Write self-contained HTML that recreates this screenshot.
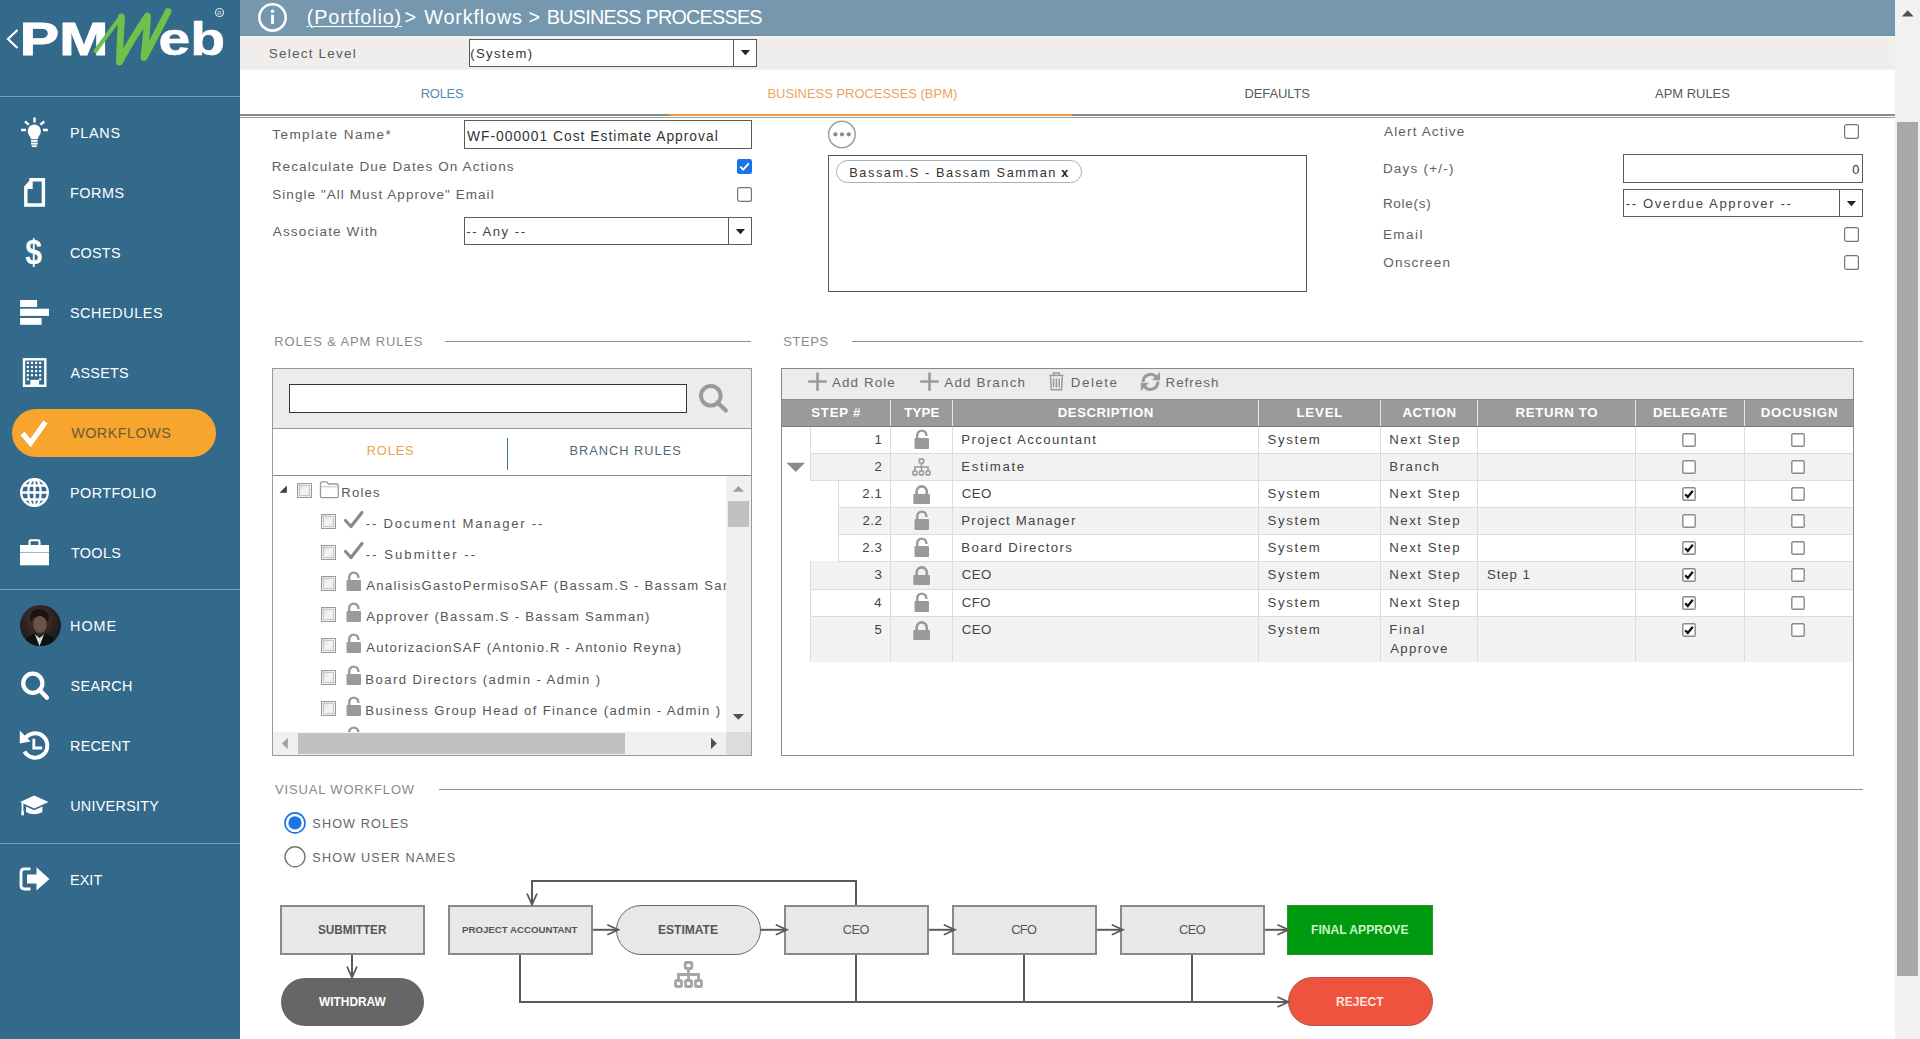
<!DOCTYPE html>
<html><head><meta charset="utf-8"><title>PMWeb - Business Processes</title>
<style>
html,body{margin:0;padding:0;width:1920px;height:1039px;overflow:hidden;background:#fff;font-family:"Liberation Sans",sans-serif}
.t{position:absolute;white-space:nowrap;line-height:normal;font-family:"Liberation Sans",sans-serif}
.r{position:absolute;box-sizing:border-box}
svg{position:absolute;overflow:visible}
svg text{font-family:"Liberation Sans",sans-serif}
</style></head><body>
<div class="r" style="left:0px;top:0px;width:240px;height:1039px;background:#336a8c"></div>
<div class="r" style="left:0px;top:96px;width:240px;height:1px;background:#6ea2c6"></div>
<div class="r" style="left:0px;top:589px;width:240px;height:1px;background:#6ea2c6"></div>
<div class="r" style="left:0px;top:843px;width:240px;height:1px;background:#6ea2c6"></div>
<svg class="r" style="left:0;top:0" width="240" height="96" viewBox="0 0 240 96">
<path d="M17.5 30 L8 39 L17.5 48" fill="none" stroke="#fff" stroke-width="2.2"/>
<text x="19.8" y="55" font-family="Liberation Sans" font-weight="bold" font-size="47" fill="#fff" stroke="#fff" stroke-width="1" textLength="88.5" lengthAdjust="spacingAndGlyphs">PM</text>
<text x="158.5" y="55" font-family="Liberation Sans" font-weight="bold" font-size="46.5" fill="#fff" stroke="#fff" stroke-width="0.6" textLength="66.5" lengthAdjust="spacingAndGlyphs">eb</text>
<path d="M95.5 51 L121 16.5" fill="none" stroke="#6cc24a" stroke-width="4" stroke-linecap="round"/>
<path d="M121.5 17 C121 32 119.5 46 119.5 62.2 C128 46 138 30 147.5 16 C147 30 145.5 44 144 57.5 C152 43 160 27 168 11.5" fill="none" stroke="#6cc24a" stroke-width="6.8" stroke-linecap="round" stroke-linejoin="round"/>
<circle cx="219.5" cy="12.5" r="4" fill="none" stroke="#cfe0ec" stroke-width="1.2"/>
<text x="219.5" y="15" font-family="Liberation Sans" font-size="6" fill="#cfe0ec" text-anchor="middle">R</text>
</svg>
<div class="r" style="left:12px;top:409px;width:204px;height:48px;background:#f7a52c;border-radius:24px"></div>
<div class="t" style="left:69.91px;top:125px;font-size:14.39px;color:#ffffff;letter-spacing:0.759px;">PLANS</div>
<div class="t" style="left:69.91px;top:185px;font-size:14.39px;color:#ffffff;letter-spacing:0.588px;">FORMS</div>
<div class="t" style="left:69.88px;top:245px;font-size:14.39px;color:#ffffff;letter-spacing:0.274px;">COSTS</div>
<div class="t" style="left:69.95px;top:305px;font-size:14.39px;color:#ffffff;letter-spacing:0.592px;">SCHEDULES</div>
<div class="t" style="left:70.56px;top:365px;font-size:14.39px;color:#ffffff;letter-spacing:0.276px;">ASSETS</div>
<div class="t" style="left:71.18px;top:425px;font-size:14.39px;color:#6d5a3c;letter-spacing:0.472px;">WORKFLOWS</div>
<div class="t" style="left:70.06px;top:485px;font-size:14.39px;color:#ffffff;letter-spacing:0.417px;">PORTFOLIO</div>
<div class="t" style="left:70.93px;top:545px;font-size:14.39px;color:#ffffff;letter-spacing:0.361px;">TOOLS</div>
<div class="t" style="left:70.06px;top:618px;font-size:14.39px;color:#ffffff;letter-spacing:0.993px;">HOME</div>
<div class="t" style="left:70.60px;top:678px;font-size:14.39px;color:#ffffff;letter-spacing:0.373px;">SEARCH</div>
<div class="t" style="left:70.06px;top:738px;font-size:14.39px;color:#ffffff;letter-spacing:0.224px;">RECENT</div>
<div class="t" style="left:70.13px;top:798px;font-size:14.39px;color:#ffffff;letter-spacing:0.285px;">UNIVERSITY</div>
<div class="t" style="left:70.06px;top:872px;font-size:14.39px;color:#ffffff;letter-spacing:0.060px;">EXIT</div>
<svg class="r" style="left:0;top:96" width="240" height="943" viewBox="0 96 240 943">
<g fill="none" stroke="#ffffff" stroke-width="2.4" stroke-linecap="butt">
<path d="M34.5 117.5 V122.5 M25 121.5 L28.8 124.6 M44.2 121.5 L40.4 124.6 M21 130 H26 M43 130 H47.8"/>
</g>
<circle cx="34.3" cy="131" r="6.6" fill="#ffffff"/>
<path d="M28.2 132.5 L31 139 H37.6 L40.4 132.5 Z" fill="#ffffff"/>
<rect x="31" y="139.8" width="6.6" height="2" fill="#ffffff"/><rect x="31" y="142.6" width="6.6" height="2" fill="#ffffff"/><rect x="31.8" y="145.3" width="5" height="1.8" fill="#ffffff"/>
<path d="M31 179.8 H43.4 V205 H25.8 V187.2 L31 181.5 Z M31 180 V187.2 H25.8" fill="none" stroke="#ffffff" stroke-width="3.4" stroke-linejoin="miter"/>
<text x="0" y="0" font-family="Liberation Sans" font-weight="bold" font-size="35" fill="#ffffff" transform="translate(25.3,264.4) scale(0.86,1)">$</text>
<rect x="20.1" y="300" width="17" height="7" fill="#ffffff"/>
<rect x="20.1" y="308.7" width="28.9" height="7.2" fill="#ffffff"/>
<rect x="20.1" y="318" width="21.5" height="6.8" fill="#ffffff"/>
<rect x="24" y="359.3" width="21.3" height="26.5" fill="none" stroke="#ffffff" stroke-width="2.4"/>
<g fill="#ffffff">
<rect x="26.8" y="361.8" width="2.2" height="2.2"/><rect x="30.9" y="361.8" width="2.2" height="2.2"/><rect x="35.0" y="361.8" width="2.2" height="2.2"/><rect x="39.1" y="361.8" width="2.2" height="2.2"/><rect x="26.8" y="365.9" width="2.2" height="2.2"/><rect x="30.9" y="365.9" width="2.2" height="2.2"/><rect x="35.0" y="365.9" width="2.2" height="2.2"/><rect x="39.1" y="365.9" width="2.2" height="2.2"/><rect x="26.8" y="370.0" width="2.2" height="2.2"/><rect x="30.9" y="370.0" width="2.2" height="2.2"/><rect x="35.0" y="370.0" width="2.2" height="2.2"/><rect x="39.1" y="370.0" width="2.2" height="2.2"/><rect x="26.8" y="374.1" width="2.2" height="2.2"/><rect x="30.9" y="374.1" width="2.2" height="2.2"/><rect x="35.0" y="374.1" width="2.2" height="2.2"/><rect x="39.1" y="374.1" width="2.2" height="2.2"/><rect x="26.8" y="378.2" width="2.2" height="2.2"/><rect x="39.1" y="378.2" width="2.2" height="2.2"/>
<rect x="30.3" y="379.8" width="8.8" height="6" />
</g>
<path d="M22.5 433.5 L30.5 443 L45.5 422" fill="none" stroke="#ffffff" stroke-width="5.2" stroke-linecap="butt" stroke-linejoin="miter"/>
<g fill="none" stroke="#ffffff" stroke-width="2.3">
<circle cx="34.5" cy="492.5" r="13.3"/>
<ellipse cx="34.5" cy="492.5" rx="6.2" ry="13.3"/>
<path d="M34.5 479.2 V505.8 M21.2 492.5 H47.8 M23.5 485.5 H45.5 M23.5 499.5 H45.5"/>
</g>
<path d="M29.5 545.5 V541.5 Q29.5 540.3 30.8 540.3 H38.2 Q39.5 540.3 39.5 541.5 V545.5" fill="none" stroke="#ffffff" stroke-width="2"/>
<rect x="20" y="545" width="29" height="20.3" fill="#ffffff"/>
<rect x="20" y="552" width="29" height="1" fill="#9fb8c8"/>
<defs><clipPath id="avc"><circle cx="40.5" cy="625.5" r="20.5"/></clipPath><radialGradient id="av" cx="0.45" cy="0.35" r="0.7"><stop offset="0" stop-color="#4a3a32"/><stop offset="0.6" stop-color="#2a211d"/><stop offset="1" stop-color="#14161a"/></radialGradient></defs>
<g clip-path="url(#avc)">
<rect x="20" y="605" width="41" height="41" fill="url(#av)"/>
<path d="M30 618 Q31 609 39 609 Q48 609 49 617 L48 622 Q44 616 39 616 Q33 617 31 622Z" fill="#1a1410"/>
<ellipse cx="40" cy="624.5" rx="6.8" ry="8.6" fill="#6a5448"/>
<path d="M22 646 Q26 636 34 634 L39.5 640 L46 634 Q55 636 59 646Z" fill="#0e1014"/>
<path d="M35 634.5 L39.5 646 L44 634.5 L39.5 638Z" fill="#d8d8d8"/>
</g>
<circle cx="32.8" cy="683.3" r="9.6" fill="none" stroke="#ffffff" stroke-width="4.2"/>
<path d="M39.5 690 L46.8 697.5" stroke="#ffffff" stroke-width="4.6" stroke-linecap="round"/>
<path d="M24.5 739.5 A12.2 12.2 0 1 1 24.5 751.5" fill="none" stroke="#ffffff" stroke-width="4"/>
<path d="M19.8 730.6 L30.6 741.6 L19.8 743.5 Z" fill="#ffffff"/>
<path d="M33.8 738.8 V748 H42.2" fill="none" stroke="#ffffff" stroke-width="2.8"/>
<path d="M20 802 L34.2 795.6 L48.5 802 L34.2 808.4 Z" fill="#ffffff"/>
<path d="M26 806.5 V812 Q34.2 816.5 42.4 812 V806.5 L34.2 810.2 Z" fill="#ffffff"/>
<path d="M22.5 803 V813" stroke="#ffffff" stroke-width="1.8"/>
<rect x="21.3" y="811.5" width="2.6" height="3.8" fill="#ffffff"/>
<path d="M30.5 868.8 H24.5 Q21 868.8 21 872.3 V885.5 Q21 889 24.5 889 H30.5" fill="none" stroke="#ffffff" stroke-width="2.8"/>
<path d="M27 874.5 H36.5 V867.3 L49.4 879 L36.5 890.6 V883.5 H27 Z" fill="#ffffff"/>
</svg>
<div class="r" style="left:240px;top:0px;width:1655px;height:36px;background:#7598ae"></div>
<svg class="r" style="left:255;top:0" width="36" height="36" viewBox="255 0 36 36">
<circle cx="272.5" cy="17.4" r="13.2" fill="none" stroke="#fff" stroke-width="2.6"/>
<circle cx="272.5" cy="11.3" r="1.8" fill="#fff"/>
<rect x="271.1" y="14.6" width="2.8" height="9.4" fill="#fff"/>
</svg>
<div class="t" style="left:306.76px;top:6px;font-size:19.77px;color:#fff;letter-spacing:0.873px;"><span style="text-decoration:underline;text-underline-offset:2px;text-decoration-thickness:1px">(Portfolio)</span></div>
<div class="t" style="left:404.61px;top:6px;font-size:19.77px;color:#fff;">&gt;</div>
<div class="t" style="left:424.30px;top:6px;font-size:19.77px;color:#fff;letter-spacing:0.857px;">Workflows</div>
<div class="t" style="left:528.41px;top:6px;font-size:19.77px;color:#fff;">&gt;</div>
<div class="t" style="left:546.77px;top:6px;font-size:19.77px;color:#fff;letter-spacing:-0.747px;">BUSINESS PROCESSES</div>
<div class="r" style="left:240px;top:36px;width:1655px;height:34px;background:linear-gradient(to bottom,#f4f6f6 0px,#f0eeec 3px,#f4ede6 6px,#f1ede9 9px,#f0eeec 14px,#f0eeec 26px,#ececec 32px,#f4f4f4 34px)"></div>
<div class="r" style="left:240px;top:35px;width:1655px;height:1px;background:#6e8c9f"></div>
<div class="t" style="left:268.69px;top:46px;font-size:13.52px;color:#5a5a5a;letter-spacing:1.226px;">Select Level</div>
<div class="r" style="left:469px;top:39px;width:288px;height:28px;background:#fff;border:1px solid #5a5a5a"></div>
<div class="r" style="left:733px;top:40px;width:1px;height:26px;background:#5a5a5a"></div>
<svg class="r" style="left:740;top:49" width="12" height="8"><path d="M0.8 1 H10 L5.4 6.2Z" fill="#222"/></svg>
<div class="t" style="left:470.18px;top:46px;font-size:13.08px;color:#333;letter-spacing:1.382px;">(System)</div>
<div class="r" style="left:240px;top:70px;width:1655px;height:44px;background:#fff"></div>
<div class="r" style="left:240px;top:114px;width:1655px;height:2px;background:#8a8a8a"></div>
<div class="r" style="left:240px;top:117px;width:1655px;height:1px;background:#a0a0a0"></div>
<div class="r" style="left:669px;top:114px;width:403px;height:2px;background:#eb9a43"></div>
<div class="t" style="left:420.63px;top:86px;font-size:12.94px;color:#5a89ac;letter-spacing:-0.201px;">ROLES</div>
<div class="t" style="left:767.43px;top:86px;font-size:12.94px;color:#eaa45a;">BUSINESS PROCESSES (BPM)</div>
<div class="t" style="left:1244.53px;top:86px;font-size:12.94px;color:#505a64;letter-spacing:-0.066px;">DEFAULTS</div>
<div class="t" style="left:1655.07px;top:86px;font-size:12.94px;color:#505a64;letter-spacing:0.006px;">APM RULES</div>
<div class="r" style="left:1895px;top:0px;width:25px;height:1039px;background:#f1f1f1"></div>
<svg class="r" style="left:1900;top:9" width="16" height="9"><path d="M1.8 7.5 H13.6 L7.7 1.3Z" fill="#505050"/></svg>
<div class="r" style="left:1897px;top:122px;width:21px;height:854px;background:#a8a8a8"></div>
<div class="t" style="left:272.30px;top:127px;font-size:13.52px;color:#606060;letter-spacing:1.424px;">Template Name*</div>
<div class="r" style="left:464px;top:120px;width:288px;height:29px;background:#fff;border:1px solid #5a5a5a"></div>
<div class="t" style="left:466.93px;top:128px;font-size:13.81px;color:#333;letter-spacing:1.016px;">WF-000001 Cost Estimate Approval</div>
<div class="t" style="left:271.68px;top:159px;font-size:13.52px;color:#606060;letter-spacing:1.113px;">Recalculate Due Dates On Actions</div>
<svg class="r" style="left:737px;top:159px" width="15" height="15" viewBox="0 0 15 15"><rect x="0" y="0" width="15" height="15" rx="2.2" fill="#1a73e8"/><path d="M3.2 7.6 L6.2 10.6 L11.8 4.4" fill="none" stroke="#fff" stroke-width="2"/></svg>
<div class="t" style="left:272.19px;top:187px;font-size:13.52px;color:#606060;letter-spacing:1.053px;">Single "All Must Approve" Email</div>
<svg class="r" style="left:737px;top:187px" width="15" height="15" viewBox="0 0 15 15"><rect x="0.6" y="0.6" width="13.8" height="13.8" rx="2" fill="#fff" stroke="#767676" stroke-width="1.2"/></svg>
<div class="t" style="left:272.77px;top:224px;font-size:13.52px;color:#606060;letter-spacing:1.150px;">Associate With</div>
<div class="r" style="left:464px;top:217px;width:288px;height:28px;background:#fff;border:1px solid #5a5a5a"></div>
<div class="r" style="left:728px;top:218px;width:1px;height:26px;background:#5a5a5a"></div>
<svg class="r" style="left:734.5px;top:227.5px" width="12" height="8"><path d="M0.8 1 H10 L5.4 6.2Z" fill="#222"/></svg>
<div class="t" style="left:466.31px;top:224px;font-size:13.08px;color:#444;letter-spacing:1.530px;">-- Any --</div>
<svg class="r" style="left:826px;top:118px" width="32" height="32" viewBox="826 118 32 32">
<circle cx="841.9" cy="134.5" r="13.3" fill="#fff" stroke="#a0a0a0" stroke-width="1.5"/>
<circle cx="835.4" cy="134.3" r="2.1" fill="#8a8a8a"/><circle cx="842" cy="134.3" r="2.1" fill="#8a8a8a"/><circle cx="848.8" cy="134.3" r="2.1" fill="#8a8a8a"/>
</svg>
<div class="r" style="left:828px;top:155px;width:479px;height:137px;background:#fff;border:1.4px solid #555"></div>
<div class="r" style="left:836px;top:160px;width:246px;height:23px;background:#fff;border:1px solid #9fb3c3;border-radius:12px"></div>
<div class="t" style="left:849.24px;top:165px;font-size:12.79px;color:#333;letter-spacing:1.555px;">Bassam.S - Bassam Samman</div>
<div class="t" style="left:1061.31px;top:166px;font-size:12.50px;color:#222;font-weight:bold;">x</div>
<div class="t" style="left:1383.97px;top:124px;font-size:13.52px;color:#606060;letter-spacing:1.156px;">Alert Active</div>
<svg class="r" style="left:1844px;top:124px" width="15" height="15" viewBox="0 0 15 15"><rect x="0.6" y="0.6" width="13.8" height="13.8" rx="2" fill="#fff" stroke="#767676" stroke-width="1.2"/></svg>
<div class="t" style="left:1382.88px;top:161px;font-size:13.52px;color:#606060;letter-spacing:1.201px;">Days (+/-)</div>
<div class="r" style="left:1623px;top:154px;width:240px;height:29px;background:#fff;border:1px solid #5a5a5a"></div>
<div class="t" style="left:1852.19px;top:162px;font-size:12.79px;color:#333;">0</div>
<div class="t" style="left:1382.88px;top:196px;font-size:13.52px;color:#606060;letter-spacing:0.728px;">Role(s)</div>
<div class="r" style="left:1623px;top:189px;width:240px;height:28px;background:#fff;border:1px solid #5a5a5a"></div>
<div class="r" style="left:1839px;top:190px;width:1px;height:26px;background:#5a5a5a"></div>
<svg class="r" style="left:1845.5px;top:199.5px" width="12" height="8"><path d="M0.8 1 H10 L5.4 6.2Z" fill="#222"/></svg>
<div class="t" style="left:1625.81px;top:196px;font-size:13.08px;color:#444;letter-spacing:1.628px;">-- Overdue Approver --</div>
<div class="t" style="left:1382.88px;top:227px;font-size:13.52px;color:#606060;letter-spacing:1.459px;">Email</div>
<svg class="r" style="left:1844px;top:227px" width="15" height="15" viewBox="0 0 15 15"><rect x="0.6" y="0.6" width="13.8" height="13.8" rx="2" fill="#fff" stroke="#767676" stroke-width="1.2"/></svg>
<div class="t" style="left:1383.36px;top:255px;font-size:13.52px;color:#606060;letter-spacing:1.141px;">Onscreen</div>
<svg class="r" style="left:1844px;top:255px" width="15" height="15" viewBox="0 0 15 15"><rect x="0.6" y="0.6" width="13.8" height="13.8" rx="2" fill="#fff" stroke="#767676" stroke-width="1.2"/></svg>
<div class="t" style="left:274.33px;top:334px;font-size:12.94px;color:#8a8a8a;letter-spacing:0.895px;">ROLES &amp; APM RULES</div>
<div class="r" style="left:445px;top:341px;width:306px;height:1px;background:#8f8f8f"></div>
<div class="t" style="left:783.22px;top:334px;font-size:12.94px;color:#8a8a8a;letter-spacing:0.609px;">STEPS</div>
<div class="r" style="left:852px;top:341px;width:1011px;height:1px;background:#8f8f8f"></div>
<div class="t" style="left:275.04px;top:782px;font-size:12.94px;color:#8a8a8a;letter-spacing:0.878px;">VISUAL WORKFLOW</div>
<div class="r" style="left:439px;top:789px;width:1424px;height:1px;background:#8f8f8f"></div>
<div class="r" style="left:272px;top:368px;width:480px;height:388px;background:#fff;border:1px solid #9a9a9a"></div>
<div class="r" style="left:273px;top:369px;width:478px;height:60px;background:#ececec"></div>
<div class="r" style="left:273px;top:428px;width:478px;height:1px;background:#9a9a9a"></div>
<div class="r" style="left:289px;top:384px;width:398px;height:29px;background:#fff;border:1px solid #333"></div>
<svg class="r" style="left:696px;top:382px" width="34" height="34" viewBox="696 382 34 34"><circle cx="710.8" cy="395.8" r="9.8" fill="none" stroke="#9a9a9a" stroke-width="4"/><path d="M717.5 402.5 L725.8 410.5" stroke="#9a9a9a" stroke-width="4.2" stroke-linecap="round"/></svg>
<div class="t" style="left:366.64px;top:443px;font-size:12.79px;color:#eaa44c;letter-spacing:0.918px;">ROLES</div>
<div class="r" style="left:507px;top:438px;width:1px;height:32px;background:#3d7f96"></div>
<div class="t" style="left:569.44px;top:443px;font-size:12.79px;color:#4f6a7a;letter-spacing:1.011px;">BRANCH RULES</div>
<div class="r" style="left:273px;top:475px;width:478px;height:1px;background:#8a8a8a"></div>
<svg class="r" style="left:279px;top:485px" width="9" height="9"><path d="M7.8 0.6 V7.8 H0.6Z" fill="#3c3c50"/></svg>
<svg class="r" style="left:296.5px;top:483px" width="15" height="15" viewBox="0 0 15 15"><defs><linearGradient id="tg296.5483" x1="0" y1="0" x2="1" y2="1"><stop offset="0" stop-color="#d8d8d8"/><stop offset="0.5" stop-color="#f4f4f4"/><stop offset="1" stop-color="#e6e6e6"/></linearGradient></defs><rect x="0.5" y="0.5" width="14" height="14" fill="url(#tg296.5483)" stroke="#9a9a9a" stroke-width="1"/><rect x="2.5" y="2.5" width="10" height="10" fill="none" stroke="#c8c8c8" stroke-width="1"/></svg>
<svg class="r" style="left:319px;top:480px" width="22" height="19" viewBox="0 0 22 19"><path d="M1.5 3.3 Q1.5 1.8 3 1.8 H7.8 L9.6 4 H17.8 Q19.3 4 19.3 5.5 V16.3 Q19.3 17.6 18 17.6 H2.8 Q1.5 17.6 1.5 16.3Z" fill="#fff" stroke="#9a9a9a" stroke-width="1.3"/><path d="M1.5 6.8 H19.3" stroke="#bcbcbc" stroke-width="1"/></svg>
<div class="t" style="left:341.22px;top:485px;font-size:13.08px;color:#555;letter-spacing:1.245px;">Roles</div>
<div class="r" style="left:273px;top:476px;width:453px;height:256px;overflow:hidden">
<svg class="r" style="left:47.5px;top:38px" width="15" height="15" viewBox="0 0 15 15"><defs><linearGradient id="tg47.538" x1="0" y1="0" x2="1" y2="1"><stop offset="0" stop-color="#d8d8d8"/><stop offset="0.5" stop-color="#f4f4f4"/><stop offset="1" stop-color="#e6e6e6"/></linearGradient></defs><rect x="0.5" y="0.5" width="14" height="14" fill="url(#tg47.538)" stroke="#9a9a9a" stroke-width="1"/><rect x="2.5" y="2.5" width="10" height="10" fill="none" stroke="#c8c8c8" stroke-width="1"/></svg>
<svg class="r" style="left:71px;top:35px" width="20" height="18" viewBox="0 0 20 18"><path d="M1.5 9.5 L7 15.5 L18 1.5" fill="none" stroke="#8a8a8a" stroke-width="3.2" stroke-linejoin="round" stroke-linecap="round"/></svg>
<div class="t" style="left:92.81px;top:40px;font-size:13.08px;color:#555;letter-spacing:1.760px;">-- Document Manager --</div>
<svg class="r" style="left:47.5px;top:69px" width="15" height="15" viewBox="0 0 15 15"><defs><linearGradient id="tg47.569" x1="0" y1="0" x2="1" y2="1"><stop offset="0" stop-color="#d8d8d8"/><stop offset="0.5" stop-color="#f4f4f4"/><stop offset="1" stop-color="#e6e6e6"/></linearGradient></defs><rect x="0.5" y="0.5" width="14" height="14" fill="url(#tg47.569)" stroke="#9a9a9a" stroke-width="1"/><rect x="2.5" y="2.5" width="10" height="10" fill="none" stroke="#c8c8c8" stroke-width="1"/></svg>
<svg class="r" style="left:71px;top:66px" width="20" height="18" viewBox="0 0 20 18"><path d="M1.5 9.5 L7 15.5 L18 1.5" fill="none" stroke="#8a8a8a" stroke-width="3.2" stroke-linejoin="round" stroke-linecap="round"/></svg>
<div class="t" style="left:92.81px;top:71px;font-size:13.08px;color:#555;letter-spacing:2.040px;">-- Submitter --</div>
<svg class="r" style="left:47.5px;top:100px" width="15" height="15" viewBox="0 0 15 15"><defs><linearGradient id="tg47.5100" x1="0" y1="0" x2="1" y2="1"><stop offset="0" stop-color="#d8d8d8"/><stop offset="0.5" stop-color="#f4f4f4"/><stop offset="1" stop-color="#e6e6e6"/></linearGradient></defs><rect x="0.5" y="0.5" width="14" height="14" fill="url(#tg47.5100)" stroke="#9a9a9a" stroke-width="1"/><rect x="2.5" y="2.5" width="10" height="10" fill="none" stroke="#c8c8c8" stroke-width="1"/></svg>
<svg class="r" style="left:73px;top:96px" width="16" height="20" viewBox="0 0 16 20"><path d="M3.2 8 V5.2 A4.6 4.6 0 0 1 12.4 5.2 V6" fill="none" stroke="#9a9a9a" stroke-width="2.4"/><rect x="0.5" y="8" width="14.5" height="11" rx="1" fill="#9a9a9a"/></svg>
<div class="t" style="left:93.37px;top:102px;font-size:13.08px;color:#555;letter-spacing:1.269px;">AnalisisGastoPermisoSAF (Bassam.S - Bassam Samman)</div>
<svg class="r" style="left:47.5px;top:131px" width="15" height="15" viewBox="0 0 15 15"><defs><linearGradient id="tg47.5131" x1="0" y1="0" x2="1" y2="1"><stop offset="0" stop-color="#d8d8d8"/><stop offset="0.5" stop-color="#f4f4f4"/><stop offset="1" stop-color="#e6e6e6"/></linearGradient></defs><rect x="0.5" y="0.5" width="14" height="14" fill="url(#tg47.5131)" stroke="#9a9a9a" stroke-width="1"/><rect x="2.5" y="2.5" width="10" height="10" fill="none" stroke="#c8c8c8" stroke-width="1"/></svg>
<svg class="r" style="left:73px;top:127px" width="16" height="20" viewBox="0 0 16 20"><path d="M3.2 8 V5.2 A4.6 4.6 0 0 1 12.4 5.2 V6" fill="none" stroke="#9a9a9a" stroke-width="2.4"/><rect x="0.5" y="8" width="14.5" height="11" rx="1" fill="#9a9a9a"/></svg>
<div class="t" style="left:93.37px;top:133px;font-size:13.08px;color:#555;letter-spacing:1.269px;">Approver (Bassam.S - Bassam Samman)</div>
<svg class="r" style="left:47.5px;top:162px" width="15" height="15" viewBox="0 0 15 15"><defs><linearGradient id="tg47.5162" x1="0" y1="0" x2="1" y2="1"><stop offset="0" stop-color="#d8d8d8"/><stop offset="0.5" stop-color="#f4f4f4"/><stop offset="1" stop-color="#e6e6e6"/></linearGradient></defs><rect x="0.5" y="0.5" width="14" height="14" fill="url(#tg47.5162)" stroke="#9a9a9a" stroke-width="1"/><rect x="2.5" y="2.5" width="10" height="10" fill="none" stroke="#c8c8c8" stroke-width="1"/></svg>
<svg class="r" style="left:73px;top:158px" width="16" height="20" viewBox="0 0 16 20"><path d="M3.2 8 V5.2 A4.6 4.6 0 0 1 12.4 5.2 V6" fill="none" stroke="#9a9a9a" stroke-width="2.4"/><rect x="0.5" y="8" width="14.5" height="11" rx="1" fill="#9a9a9a"/></svg>
<div class="t" style="left:93.37px;top:164px;font-size:13.08px;color:#555;letter-spacing:1.211px;">AutorizacionSAF (Antonio.R - Antonio Reyna)</div>
<svg class="r" style="left:47.5px;top:194px" width="15" height="15" viewBox="0 0 15 15"><defs><linearGradient id="tg47.5194" x1="0" y1="0" x2="1" y2="1"><stop offset="0" stop-color="#d8d8d8"/><stop offset="0.5" stop-color="#f4f4f4"/><stop offset="1" stop-color="#e6e6e6"/></linearGradient></defs><rect x="0.5" y="0.5" width="14" height="14" fill="url(#tg47.5194)" stroke="#9a9a9a" stroke-width="1"/><rect x="2.5" y="2.5" width="10" height="10" fill="none" stroke="#c8c8c8" stroke-width="1"/></svg>
<svg class="r" style="left:73px;top:190px" width="16" height="20" viewBox="0 0 16 20"><path d="M3.2 8 V5.2 A4.6 4.6 0 0 1 12.4 5.2 V6" fill="none" stroke="#9a9a9a" stroke-width="2.4"/><rect x="0.5" y="8" width="14.5" height="11" rx="1" fill="#9a9a9a"/></svg>
<div class="t" style="left:92.32px;top:196px;font-size:13.08px;color:#555;letter-spacing:1.435px;">Board Directors (admin - Admin )</div>
<svg class="r" style="left:47.5px;top:225px" width="15" height="15" viewBox="0 0 15 15"><defs><linearGradient id="tg47.5225" x1="0" y1="0" x2="1" y2="1"><stop offset="0" stop-color="#d8d8d8"/><stop offset="0.5" stop-color="#f4f4f4"/><stop offset="1" stop-color="#e6e6e6"/></linearGradient></defs><rect x="0.5" y="0.5" width="14" height="14" fill="url(#tg47.5225)" stroke="#9a9a9a" stroke-width="1"/><rect x="2.5" y="2.5" width="10" height="10" fill="none" stroke="#c8c8c8" stroke-width="1"/></svg>
<svg class="r" style="left:73px;top:221px" width="16" height="20" viewBox="0 0 16 20"><path d="M3.2 8 V5.2 A4.6 4.6 0 0 1 12.4 5.2 V6" fill="none" stroke="#9a9a9a" stroke-width="2.4"/><rect x="0.5" y="8" width="14.5" height="11" rx="1" fill="#9a9a9a"/></svg>
<div class="t" style="left:92.32px;top:227px;font-size:13.08px;color:#555;letter-spacing:1.358px;">Business Group Head of Finance (admin - Admin )</div>
<svg class="r" style="left:73px;top:251px" width="16" height="20" viewBox="0 0 16 20"><path d="M3.2 8 V5.2 A4.6 4.6 0 0 1 12.4 5.2 V6" fill="none" stroke="#9a9a9a" stroke-width="2.4"/><rect x="0.5" y="8" width="14.5" height="11" rx="1" fill="#9a9a9a"/></svg>
</div>
<div class="r" style="left:726px;top:476px;width:25px;height:256px;background:#f0f0f0"></div>
<svg class="r" style="left:732px;top:485px" width="13" height="8"><path d="M0.8 6.8 H12 L6.4 1Z" fill="#a0a0a0"/></svg>
<div class="r" style="left:728px;top:501px;width:21px;height:26px;background:#c1c1c1"></div>
<svg class="r" style="left:732px;top:713px" width="13" height="8"><path d="M0.8 1 H12 L6.4 6.8Z" fill="#505050"/></svg>
<div class="r" style="left:273px;top:732px;width:453px;height:23px;background:#f0f0f0"></div>
<div class="r" style="left:298px;top:733px;width:327px;height:21px;background:#c1c1c1"></div>
<svg class="r" style="left:281px;top:737px" width="8" height="13"><path d="M6.8 0.8 V12 L1 6.4Z" fill="#a0a0a0"/></svg>
<svg class="r" style="left:710px;top:737px" width="8" height="13"><path d="M1 0.8 V12 L6.8 6.4Z" fill="#505050"/></svg>
<div class="r" style="left:726px;top:732px;width:25px;height:23px;background:#dcdcdc"></div>
<div class="r" style="left:781px;top:368px;width:1073px;height:388px;background:#fff;border:1px solid #8a8a8a"></div>
<div class="r" style="left:782px;top:369px;width:1071px;height:30px;background:#ececec"></div>
<svg class="r" style="left:800px;top:368px" width="440" height="30" viewBox="800 368 440 30">
<path d="M817.5 372.4 V390.7 M808.2 381.5 H826.9 M929.5 372.4 V390.7 M920.2 381.5 H938.8" stroke="#9a9a9a" stroke-width="2.6"/>
<g fill="none" stroke="#9a9a9a" stroke-width="1.5">
<path d="M1049.3 375.5 H1063.5 M1053.5 375.5 V373 H1059.3 V375.5"/>
<path d="M1050.5 376.5 L1051.3 389.8 H1061.5 L1062.3 376.5"/>
<path d="M1053.6 378.5 V387.5 M1056.4 378.5 V387.5 M1059.2 378.5 V387.5"/>
</g>
<g fill="none" stroke="#9a9a9a" stroke-width="3">
<path d="M1143.2 382 A7.4 7.4 0 0 1 1156.2 377"/>
<path d="M1157.8 381.5 A7.4 7.4 0 0 1 1144.6 386.5"/>
</g>
<path d="M1160 372 V380.3 H1151.8Z M1140.8 391.1 V382.8 H1149Z" fill="#9a9a9a"/>
</svg>
<div class="t" style="left:832.07px;top:375px;font-size:13.37px;color:#666;letter-spacing:1.101px;">Add Role</div>
<div class="t" style="left:944.27px;top:375px;font-size:13.37px;color:#666;letter-spacing:1.211px;">Add Branch</div>
<div class="t" style="left:1070.80px;top:375px;font-size:13.37px;color:#666;letter-spacing:1.525px;">Delete</div>
<div class="t" style="left:1165.50px;top:375px;font-size:13.37px;color:#666;letter-spacing:1.006px;">Refresh</div>
<div class="r" style="left:782px;top:399px;width:1071px;height:28px;background:#9a9a9a;border-top:1px solid #8c8c8c;border-bottom:1px solid #7a7a7a"></div>
<div class="r" style="left:890px;top:400px;width:1px;height:26px;background:#e6e6e6"></div>
<div class="r" style="left:952px;top:400px;width:1px;height:26px;background:#e6e6e6"></div>
<div class="r" style="left:1258px;top:400px;width:1px;height:26px;background:#e6e6e6"></div>
<div class="r" style="left:1380px;top:400px;width:1px;height:26px;background:#e6e6e6"></div>
<div class="r" style="left:1477px;top:400px;width:1px;height:26px;background:#e6e6e6"></div>
<div class="r" style="left:1635px;top:400px;width:1px;height:26px;background:#e6e6e6"></div>
<div class="r" style="left:1744px;top:400px;width:1px;height:26px;background:#e6e6e6"></div>
<div class="t" style="left:811.20px;top:405px;font-size:13.23px;color:#fff;letter-spacing:0.792px;font-weight:bold;">STEP #</div>
<div class="t" style="left:904.17px;top:405px;font-size:13.23px;color:#fff;letter-spacing:0.202px;font-weight:bold;">TYPE</div>
<div class="t" style="left:1057.81px;top:405px;font-size:13.23px;color:#fff;letter-spacing:0.508px;font-weight:bold;">DESCRIPTION</div>
<div class="t" style="left:1296.41px;top:405px;font-size:13.23px;color:#fff;letter-spacing:0.842px;font-weight:bold;">LEVEL</div>
<div class="t" style="left:1402.47px;top:405px;font-size:13.23px;color:#fff;letter-spacing:0.606px;font-weight:bold;">ACTION</div>
<div class="t" style="left:1515.61px;top:405px;font-size:13.23px;color:#fff;letter-spacing:0.643px;font-weight:bold;">RETURN TO</div>
<div class="t" style="left:1652.91px;top:405px;font-size:13.23px;color:#fff;letter-spacing:0.499px;font-weight:bold;">DELEGATE</div>
<div class="t" style="left:1760.71px;top:405px;font-size:13.23px;color:#fff;letter-spacing:0.785px;font-weight:bold;">DOCUSIGN</div>
<div class="r" style="left:810px;top:427px;width:1043px;height:26px;background:#fff"></div>
<div class="r" style="left:810px;top:427px;width:1px;height:26px;background:#dcdcdc"></div>
<div class="r" style="left:890px;top:427px;width:1px;height:26px;background:#dcdcdc"></div>
<div class="r" style="left:952px;top:427px;width:1px;height:26px;background:#dcdcdc"></div>
<div class="r" style="left:1258px;top:427px;width:1px;height:26px;background:#dcdcdc"></div>
<div class="r" style="left:1380px;top:427px;width:1px;height:26px;background:#dcdcdc"></div>
<div class="r" style="left:1477px;top:427px;width:1px;height:26px;background:#dcdcdc"></div>
<div class="r" style="left:1635px;top:427px;width:1px;height:26px;background:#dcdcdc"></div>
<div class="r" style="left:1744px;top:427px;width:1px;height:26px;background:#dcdcdc"></div>
<div class="t" style="left:874.59px;top:432px;font-size:13.23px;color:#444;letter-spacing:0.600px;">1</div>
<svg class="r" style="left:914px;top:430px" width="16" height="20" viewBox="0 0 16 20"><path d="M3.2 8 V5.2 A4.6 4.6 0 0 1 12.4 5.2 V6" fill="none" stroke="#9a9a9a" stroke-width="2.4"/><rect x="0.5" y="8" width="14.5" height="11" rx="1" fill="#9a9a9a"/></svg>
<div class="t" style="left:961.31px;top:432px;font-size:13.23px;color:#444;letter-spacing:1.442px;">Project Accountant</div>
<div class="t" style="left:1267.60px;top:432px;font-size:13.23px;color:#444;letter-spacing:1.635px;">System</div>
<div class="t" style="left:1389.31px;top:432px;font-size:13.23px;color:#444;letter-spacing:1.519px;">Next Step</div>
<svg class="r" style="left:1682.0px;top:432.5px" width="14" height="14" viewBox="0 0 14 14"><rect x="0.8" y="0.8" width="12.4" height="12.4" rx="1.2" fill="#fff" stroke="#8a8a8a" stroke-width="1.4"/></svg>
<svg class="r" style="left:1791.2px;top:432.5px" width="14" height="14" viewBox="0 0 14 14"><rect x="0.8" y="0.8" width="12.4" height="12.4" rx="1.2" fill="#fff" stroke="#8a8a8a" stroke-width="1.4"/></svg>
<div class="r" style="left:810px;top:453px;width:1043px;height:27px;background:#f2f2f2"></div>
<div class="r" style="left:810px;top:453px;width:1px;height:27px;background:#dcdcdc"></div>
<div class="r" style="left:890px;top:453px;width:1px;height:27px;background:#dcdcdc"></div>
<div class="r" style="left:952px;top:453px;width:1px;height:27px;background:#dcdcdc"></div>
<div class="r" style="left:1258px;top:453px;width:1px;height:27px;background:#dcdcdc"></div>
<div class="r" style="left:1380px;top:453px;width:1px;height:27px;background:#dcdcdc"></div>
<div class="r" style="left:1477px;top:453px;width:1px;height:27px;background:#dcdcdc"></div>
<div class="r" style="left:1635px;top:453px;width:1px;height:27px;background:#dcdcdc"></div>
<div class="r" style="left:1744px;top:453px;width:1px;height:27px;background:#dcdcdc"></div>
<div class="t" style="left:874.62px;top:459px;font-size:13.23px;color:#444;letter-spacing:0.600px;">2</div>
<svg class="r" style="left:912px;top:457.5px" width="19" height="18" viewBox="0 0 29 27"><g fill="none" stroke="#9a9a9a" stroke-width="2.44"><rect x="11.2" y="1.5" width="6.6" height="6" rx="1"/><path d="M14.5 7.5 V20.5 M4.5 20.5 V13.5 H24.5 V20.5"/><rect x="1.5" y="19.5" width="6" height="6" rx="1.2"/><rect x="11.5" y="19.5" width="6" height="6" rx="1.2"/><rect x="21.5" y="19.5" width="6" height="6" rx="1.2"/></g></svg>
<div class="t" style="left:961.31px;top:459px;font-size:13.23px;color:#444;letter-spacing:1.629px;">Estimate</div>
<div class="t" style="left:1389.31px;top:459px;font-size:13.23px;color:#444;letter-spacing:1.519px;">Branch</div>
<svg class="r" style="left:1682.0px;top:459.5px" width="14" height="14" viewBox="0 0 14 14"><rect x="0.8" y="0.8" width="12.4" height="12.4" rx="1.2" fill="#fff" stroke="#8a8a8a" stroke-width="1.4"/></svg>
<svg class="r" style="left:1791.2px;top:459.5px" width="14" height="14" viewBox="0 0 14 14"><rect x="0.8" y="0.8" width="12.4" height="12.4" rx="1.2" fill="#fff" stroke="#8a8a8a" stroke-width="1.4"/></svg>
<div class="r" style="left:838px;top:480px;width:1015px;height:27px;background:#fff"></div>
<div class="r" style="left:838px;top:480px;width:1px;height:27px;background:#dcdcdc"></div>
<div class="r" style="left:890px;top:480px;width:1px;height:27px;background:#dcdcdc"></div>
<div class="r" style="left:952px;top:480px;width:1px;height:27px;background:#dcdcdc"></div>
<div class="r" style="left:1258px;top:480px;width:1px;height:27px;background:#dcdcdc"></div>
<div class="r" style="left:1380px;top:480px;width:1px;height:27px;background:#dcdcdc"></div>
<div class="r" style="left:1477px;top:480px;width:1px;height:27px;background:#dcdcdc"></div>
<div class="r" style="left:1635px;top:480px;width:1px;height:27px;background:#dcdcdc"></div>
<div class="r" style="left:1744px;top:480px;width:1px;height:27px;background:#dcdcdc"></div>
<div class="t" style="left:862.34px;top:486px;font-size:13.23px;color:#444;letter-spacing:0.600px;">2.1</div>
<svg class="r" style="left:913px;top:484.5px" width="18" height="20" viewBox="0 0 18 20"><path d="M3.6 9.5 V6.5 A5.1 5.1 0 0 1 13.8 6.5 V9.5" fill="none" stroke="#9a9a9a" stroke-width="2.6"/><rect x="0.3" y="9" width="16.7" height="10" rx="1" fill="#9a9a9a"/></svg>
<div class="t" style="left:961.74px;top:486px;font-size:13.23px;color:#444;letter-spacing:0.410px;">CEO</div>
<div class="t" style="left:1267.60px;top:486px;font-size:13.23px;color:#444;letter-spacing:1.635px;">System</div>
<div class="t" style="left:1389.31px;top:486px;font-size:13.23px;color:#444;letter-spacing:1.519px;">Next Step</div>
<svg class="r" style="left:1682.0px;top:486.5px" width="14" height="14" viewBox="0 0 14 14"><rect x="0.8" y="0.8" width="12.4" height="12.4" rx="1.2" fill="#fff" stroke="#8a8a8a" stroke-width="1.4"/><path d="M3.2 7.2 L5.8 10 L10.8 3.8" fill="none" stroke="#111" stroke-width="2.3"/></svg>
<svg class="r" style="left:1791.2px;top:486.5px" width="14" height="14" viewBox="0 0 14 14"><rect x="0.8" y="0.8" width="12.4" height="12.4" rx="1.2" fill="#fff" stroke="#8a8a8a" stroke-width="1.4"/></svg>
<div class="r" style="left:838px;top:507px;width:1015px;height:27px;background:#f2f2f2"></div>
<div class="r" style="left:838px;top:507px;width:1px;height:27px;background:#dcdcdc"></div>
<div class="r" style="left:890px;top:507px;width:1px;height:27px;background:#dcdcdc"></div>
<div class="r" style="left:952px;top:507px;width:1px;height:27px;background:#dcdcdc"></div>
<div class="r" style="left:1258px;top:507px;width:1px;height:27px;background:#dcdcdc"></div>
<div class="r" style="left:1380px;top:507px;width:1px;height:27px;background:#dcdcdc"></div>
<div class="r" style="left:1477px;top:507px;width:1px;height:27px;background:#dcdcdc"></div>
<div class="r" style="left:1635px;top:507px;width:1px;height:27px;background:#dcdcdc"></div>
<div class="r" style="left:1744px;top:507px;width:1px;height:27px;background:#dcdcdc"></div>
<div class="t" style="left:862.38px;top:513px;font-size:13.23px;color:#444;letter-spacing:0.600px;">2.2</div>
<svg class="r" style="left:914px;top:511px" width="16" height="20" viewBox="0 0 16 20"><path d="M3.2 8 V5.2 A4.6 4.6 0 0 1 12.4 5.2 V6" fill="none" stroke="#9a9a9a" stroke-width="2.4"/><rect x="0.5" y="8" width="14.5" height="11" rx="1" fill="#9a9a9a"/></svg>
<div class="t" style="left:961.31px;top:513px;font-size:13.23px;color:#444;letter-spacing:1.217px;">Project Manager</div>
<div class="t" style="left:1267.60px;top:513px;font-size:13.23px;color:#444;letter-spacing:1.635px;">System</div>
<div class="t" style="left:1389.31px;top:513px;font-size:13.23px;color:#444;letter-spacing:1.519px;">Next Step</div>
<svg class="r" style="left:1682.0px;top:513.5px" width="14" height="14" viewBox="0 0 14 14"><rect x="0.8" y="0.8" width="12.4" height="12.4" rx="1.2" fill="#fff" stroke="#8a8a8a" stroke-width="1.4"/></svg>
<svg class="r" style="left:1791.2px;top:513.5px" width="14" height="14" viewBox="0 0 14 14"><rect x="0.8" y="0.8" width="12.4" height="12.4" rx="1.2" fill="#fff" stroke="#8a8a8a" stroke-width="1.4"/></svg>
<div class="r" style="left:838px;top:534px;width:1015px;height:27px;background:#fff"></div>
<div class="r" style="left:838px;top:534px;width:1px;height:27px;background:#dcdcdc"></div>
<div class="r" style="left:890px;top:534px;width:1px;height:27px;background:#dcdcdc"></div>
<div class="r" style="left:952px;top:534px;width:1px;height:27px;background:#dcdcdc"></div>
<div class="r" style="left:1258px;top:534px;width:1px;height:27px;background:#dcdcdc"></div>
<div class="r" style="left:1380px;top:534px;width:1px;height:27px;background:#dcdcdc"></div>
<div class="r" style="left:1477px;top:534px;width:1px;height:27px;background:#dcdcdc"></div>
<div class="r" style="left:1635px;top:534px;width:1px;height:27px;background:#dcdcdc"></div>
<div class="r" style="left:1744px;top:534px;width:1px;height:27px;background:#dcdcdc"></div>
<div class="t" style="left:862.28px;top:540px;font-size:13.23px;color:#444;letter-spacing:0.600px;">2.3</div>
<svg class="r" style="left:914px;top:538px" width="16" height="20" viewBox="0 0 16 20"><path d="M3.2 8 V5.2 A4.6 4.6 0 0 1 12.4 5.2 V6" fill="none" stroke="#9a9a9a" stroke-width="2.4"/><rect x="0.5" y="8" width="14.5" height="11" rx="1" fill="#9a9a9a"/></svg>
<div class="t" style="left:961.31px;top:540px;font-size:13.23px;color:#444;letter-spacing:1.333px;">Board Directors</div>
<div class="t" style="left:1267.60px;top:540px;font-size:13.23px;color:#444;letter-spacing:1.635px;">System</div>
<div class="t" style="left:1389.31px;top:540px;font-size:13.23px;color:#444;letter-spacing:1.519px;">Next Step</div>
<svg class="r" style="left:1682.0px;top:540.5px" width="14" height="14" viewBox="0 0 14 14"><rect x="0.8" y="0.8" width="12.4" height="12.4" rx="1.2" fill="#fff" stroke="#8a8a8a" stroke-width="1.4"/><path d="M3.2 7.2 L5.8 10 L10.8 3.8" fill="none" stroke="#111" stroke-width="2.3"/></svg>
<svg class="r" style="left:1791.2px;top:540.5px" width="14" height="14" viewBox="0 0 14 14"><rect x="0.8" y="0.8" width="12.4" height="12.4" rx="1.2" fill="#fff" stroke="#8a8a8a" stroke-width="1.4"/></svg>
<div class="r" style="left:810px;top:561px;width:1043px;height:28px;background:#f2f2f2"></div>
<div class="r" style="left:810px;top:561px;width:1px;height:28px;background:#dcdcdc"></div>
<div class="r" style="left:890px;top:561px;width:1px;height:28px;background:#dcdcdc"></div>
<div class="r" style="left:952px;top:561px;width:1px;height:28px;background:#dcdcdc"></div>
<div class="r" style="left:1258px;top:561px;width:1px;height:28px;background:#dcdcdc"></div>
<div class="r" style="left:1380px;top:561px;width:1px;height:28px;background:#dcdcdc"></div>
<div class="r" style="left:1477px;top:561px;width:1px;height:28px;background:#dcdcdc"></div>
<div class="r" style="left:1635px;top:561px;width:1px;height:28px;background:#dcdcdc"></div>
<div class="r" style="left:1744px;top:561px;width:1px;height:28px;background:#dcdcdc"></div>
<div class="t" style="left:874.52px;top:567px;font-size:13.23px;color:#444;letter-spacing:0.600px;">3</div>
<svg class="r" style="left:913px;top:565.5px" width="18" height="20" viewBox="0 0 18 20"><path d="M3.6 9.5 V6.5 A5.1 5.1 0 0 1 13.8 6.5 V9.5" fill="none" stroke="#9a9a9a" stroke-width="2.6"/><rect x="0.3" y="9" width="16.7" height="10" rx="1" fill="#9a9a9a"/></svg>
<div class="t" style="left:961.74px;top:567px;font-size:13.23px;color:#444;letter-spacing:0.410px;">CEO</div>
<div class="t" style="left:1267.60px;top:567px;font-size:13.23px;color:#444;letter-spacing:1.635px;">System</div>
<div class="t" style="left:1389.31px;top:567px;font-size:13.23px;color:#444;letter-spacing:1.519px;">Next Step</div>
<div class="t" style="left:1486.90px;top:567px;font-size:13.23px;color:#444;letter-spacing:0.960px;">Step 1</div>
<svg class="r" style="left:1682.0px;top:567.5px" width="14" height="14" viewBox="0 0 14 14"><rect x="0.8" y="0.8" width="12.4" height="12.4" rx="1.2" fill="#fff" stroke="#8a8a8a" stroke-width="1.4"/><path d="M3.2 7.2 L5.8 10 L10.8 3.8" fill="none" stroke="#111" stroke-width="2.3"/></svg>
<svg class="r" style="left:1791.2px;top:567.5px" width="14" height="14" viewBox="0 0 14 14"><rect x="0.8" y="0.8" width="12.4" height="12.4" rx="1.2" fill="#fff" stroke="#8a8a8a" stroke-width="1.4"/></svg>
<div class="r" style="left:810px;top:589px;width:1043px;height:27px;background:#fff"></div>
<div class="r" style="left:810px;top:589px;width:1px;height:27px;background:#dcdcdc"></div>
<div class="r" style="left:890px;top:589px;width:1px;height:27px;background:#dcdcdc"></div>
<div class="r" style="left:952px;top:589px;width:1px;height:27px;background:#dcdcdc"></div>
<div class="r" style="left:1258px;top:589px;width:1px;height:27px;background:#dcdcdc"></div>
<div class="r" style="left:1380px;top:589px;width:1px;height:27px;background:#dcdcdc"></div>
<div class="r" style="left:1477px;top:589px;width:1px;height:27px;background:#dcdcdc"></div>
<div class="r" style="left:1635px;top:589px;width:1px;height:27px;background:#dcdcdc"></div>
<div class="r" style="left:1744px;top:589px;width:1px;height:27px;background:#dcdcdc"></div>
<div class="t" style="left:874.32px;top:595px;font-size:13.23px;color:#444;letter-spacing:0.600px;">4</div>
<svg class="r" style="left:914px;top:593px" width="16" height="20" viewBox="0 0 16 20"><path d="M3.2 8 V5.2 A4.6 4.6 0 0 1 12.4 5.2 V6" fill="none" stroke="#9a9a9a" stroke-width="2.4"/><rect x="0.5" y="8" width="14.5" height="11" rx="1" fill="#9a9a9a"/></svg>
<div class="t" style="left:961.74px;top:595px;font-size:13.23px;color:#444;letter-spacing:0.491px;">CFO</div>
<div class="t" style="left:1267.60px;top:595px;font-size:13.23px;color:#444;letter-spacing:1.635px;">System</div>
<div class="t" style="left:1389.31px;top:595px;font-size:13.23px;color:#444;letter-spacing:1.519px;">Next Step</div>
<svg class="r" style="left:1682.0px;top:595.5px" width="14" height="14" viewBox="0 0 14 14"><rect x="0.8" y="0.8" width="12.4" height="12.4" rx="1.2" fill="#fff" stroke="#8a8a8a" stroke-width="1.4"/><path d="M3.2 7.2 L5.8 10 L10.8 3.8" fill="none" stroke="#111" stroke-width="2.3"/></svg>
<svg class="r" style="left:1791.2px;top:595.5px" width="14" height="14" viewBox="0 0 14 14"><rect x="0.8" y="0.8" width="12.4" height="12.4" rx="1.2" fill="#fff" stroke="#8a8a8a" stroke-width="1.4"/></svg>
<div class="r" style="left:810px;top:616px;width:1043px;height:46px;background:#f2f2f2"></div>
<div class="r" style="left:810px;top:616px;width:1px;height:46px;background:#dcdcdc"></div>
<div class="r" style="left:890px;top:616px;width:1px;height:46px;background:#dcdcdc"></div>
<div class="r" style="left:952px;top:616px;width:1px;height:46px;background:#dcdcdc"></div>
<div class="r" style="left:1258px;top:616px;width:1px;height:46px;background:#dcdcdc"></div>
<div class="r" style="left:1380px;top:616px;width:1px;height:46px;background:#dcdcdc"></div>
<div class="r" style="left:1477px;top:616px;width:1px;height:46px;background:#dcdcdc"></div>
<div class="r" style="left:1635px;top:616px;width:1px;height:46px;background:#dcdcdc"></div>
<div class="r" style="left:1744px;top:616px;width:1px;height:46px;background:#dcdcdc"></div>
<div class="t" style="left:874.49px;top:622px;font-size:13.23px;color:#444;letter-spacing:0.600px;">5</div>
<svg class="r" style="left:913px;top:620.5px" width="18" height="20" viewBox="0 0 18 20"><path d="M3.6 9.5 V6.5 A5.1 5.1 0 0 1 13.8 6.5 V9.5" fill="none" stroke="#9a9a9a" stroke-width="2.6"/><rect x="0.3" y="9" width="16.7" height="10" rx="1" fill="#9a9a9a"/></svg>
<div class="t" style="left:961.74px;top:622px;font-size:13.23px;color:#444;letter-spacing:0.410px;">CEO</div>
<div class="t" style="left:1267.60px;top:622px;font-size:13.23px;color:#444;letter-spacing:1.635px;">System</div>
<div class="t" style="left:1389.31px;top:622px;font-size:13.23px;color:#444;letter-spacing:1.579px;">Final</div>
<div class="t" style="left:1390.17px;top:641px;font-size:13.23px;color:#444;letter-spacing:1.343px;">Approve</div>
<svg class="r" style="left:1682.0px;top:622.5px" width="14" height="14" viewBox="0 0 14 14"><rect x="0.8" y="0.8" width="12.4" height="12.4" rx="1.2" fill="#fff" stroke="#8a8a8a" stroke-width="1.4"/><path d="M3.2 7.2 L5.8 10 L10.8 3.8" fill="none" stroke="#111" stroke-width="2.3"/></svg>
<svg class="r" style="left:1791.2px;top:622.5px" width="14" height="14" viewBox="0 0 14 14"><rect x="0.8" y="0.8" width="12.4" height="12.4" rx="1.2" fill="#fff" stroke="#8a8a8a" stroke-width="1.4"/></svg>
<div class="r" style="left:810px;top:453px;width:1043px;height:1px;background:#dcdcdc"></div>
<div class="r" style="left:810px;top:480px;width:1043px;height:1px;background:#dcdcdc"></div>
<div class="r" style="left:838px;top:507px;width:1015px;height:1px;background:#dcdcdc"></div>
<div class="r" style="left:838px;top:534px;width:1015px;height:1px;background:#dcdcdc"></div>
<div class="r" style="left:838px;top:561px;width:1015px;height:1px;background:#dcdcdc"></div>
<div class="r" style="left:810px;top:589px;width:1043px;height:1px;background:#dcdcdc"></div>
<div class="r" style="left:810px;top:616px;width:1043px;height:1px;background:#dcdcdc"></div>
<svg class="r" style="left:786px;top:462px" width="20" height="11"><path d="M0.5 0.8 H19 L9.8 10Z" fill="#8a8a8a"/></svg>
<svg class="r" style="left:280px;top:808px" width="32" height="64" viewBox="280 808 32 64">
<circle cx="295" cy="822.9" r="10" fill="#fff" stroke="#1a73e8" stroke-width="1.6"/>
<circle cx="295" cy="822.9" r="6.6" fill="#1a73e8"/>
<circle cx="295" cy="856.8" r="10" fill="#fff" stroke="#767676" stroke-width="1.4"/>
</svg>
<div class="t" style="left:312.33px;top:817px;font-size:12.65px;color:#666;letter-spacing:1.134px;">SHOW ROLES</div>
<div class="t" style="left:312.33px;top:851px;font-size:12.65px;color:#666;letter-spacing:1.168px;">SHOW USER NAMES</div>
<div class="r" style="left:280px;top:905px;width:145px;height:50px;background:#e8e8e8;border:2px solid #8a8a8a"></div>
<div class="r" style="left:448px;top:905px;width:145px;height:50px;background:#e8e8e8;border:2px solid #8a8a8a"></div>
<div class="r" style="left:616px;top:905px;width:145px;height:50px;background:#e8e8e8;border:1.8px solid #686868;border-radius:25px"></div>
<div class="r" style="left:784px;top:905px;width:145px;height:50px;background:#e8e8e8;border:2px solid #8a8a8a"></div>
<div class="r" style="left:952px;top:905px;width:145px;height:50px;background:#e8e8e8;border:2px solid #8a8a8a"></div>
<div class="r" style="left:1120px;top:905px;width:145px;height:50px;background:#e8e8e8;border:2px solid #8a8a8a"></div>
<div class="r" style="left:1287px;top:905px;width:146px;height:50px;background:#009a10;border:1.5px solid #2b8f2b"></div>
<div class="r" style="left:281px;top:978px;width:143px;height:48px;background:#666666;border-radius:24px"></div>
<div class="r" style="left:1288px;top:977px;width:145px;height:49px;background:#ee5340;border:1.3px solid #b5524a;border-radius:24.5px"></div>
<svg class="r" style="left:270px;top:870px" width="1180" height="165" viewBox="270 870 1180 165"><g fill="none" stroke="#5a5a5a" stroke-width="2"><path d="M352 955 V976.5"/><path d="M856 905 V881 H532 V903.5"/><path d="M520 955 V1002 H1286.5 M856 955 V1002 M1024 955 V1002 M1192 955 V1002"/><path d="M593 929.8 H616"/><path d="M761 929.8 H784"/><path d="M929 929.8 H952"/><path d="M1097 929.8 H1120"/><path d="M1265 929.8 H1287"/></g><g><path d="M347 966.5 L352 977.5 L357 966.5" fill="none" stroke="#5a5a5a" stroke-width="1.8"/><path d="M527 893.5 L532 904.5 L537 893.5" fill="none" stroke="#5a5a5a" stroke-width="1.8"/><path d="M607.3 924.8 L618.3 929.8 L607.3 934.8" fill="none" stroke="#5a5a5a" stroke-width="1.8"/><path d="M775.8 924.8 L786.8 929.8 L775.8 934.8" fill="none" stroke="#5a5a5a" stroke-width="1.8"/><path d="M943.8 924.8 L954.8 929.8 L943.8 934.8" fill="none" stroke="#5a5a5a" stroke-width="1.8"/><path d="M1111.8 924.8 L1122.8 929.8 L1111.8 934.8" fill="none" stroke="#5a5a5a" stroke-width="1.8"/><path d="M1277.5 924.8 L1288.5 929.8 L1277.5 934.8" fill="none" stroke="#5a5a5a" stroke-width="1.8"/><path d="M1277.5 997 L1288.5 1002 L1277.5 1007" fill="none" stroke="#5a5a5a" stroke-width="1.8"/></g></svg>
<div class="t" style="left:318.35px;top:922px;font-size:12.79px;color:#555;transform:scaleX(0.9171);transform-origin:0 0;font-weight:bold;">SUBMITTER</div>
<div class="t" style="left:462.35px;top:924px;font-size:9.74px;color:#555;transform:scaleX(0.9933);transform-origin:0 0;font-weight:bold;">PROJECT ACCOUNTANT</div>
<div class="t" style="left:657.94px;top:922px;font-size:12.79px;color:#555;transform:scaleX(0.9422);transform-origin:0 0;font-weight:bold;">ESTIMATE</div>
<div class="t" style="left:842.86px;top:922px;font-size:12.79px;color:#555;letter-spacing:-0.613px;">CEO</div>
<div class="t" style="left:1011.26px;top:922px;font-size:12.79px;color:#555;letter-spacing:-0.671px;">CFO</div>
<div class="t" style="left:1179.06px;top:922px;font-size:12.79px;color:#555;letter-spacing:-0.588px;">CEO</div>
<div class="t" style="left:1311.28px;top:922px;font-size:12.79px;color:#cdf3c4;transform:scaleX(0.9470);transform-origin:0 0;font-weight:bold;">FINAL APPROVE</div>
<div class="t" style="left:318.70px;top:994px;font-size:12.79px;color:#fff;transform:scaleX(0.9314);transform-origin:0 0;font-weight:bold;">WITHDRAW</div>
<div class="t" style="left:1335.68px;top:994px;font-size:12.79px;color:#fde3de;transform:scaleX(0.9461);transform-origin:0 0;font-weight:bold;">REJECT</div>
<svg class="r" style="left:673.5px;top:961px" width="29" height="27" viewBox="0 0 29 27"><g fill="none" stroke="#a5a5a5" stroke-width="2.80"><rect x="11.2" y="1.5" width="6.6" height="6" rx="1"/><path d="M14.5 7.5 V20.5 M4.5 20.5 V13.5 H24.5 V20.5"/><rect x="1.5" y="19.5" width="6" height="6" rx="1.2"/><rect x="11.5" y="19.5" width="6" height="6" rx="1.2"/><rect x="21.5" y="19.5" width="6" height="6" rx="1.2"/></g></svg>
</body></html>
